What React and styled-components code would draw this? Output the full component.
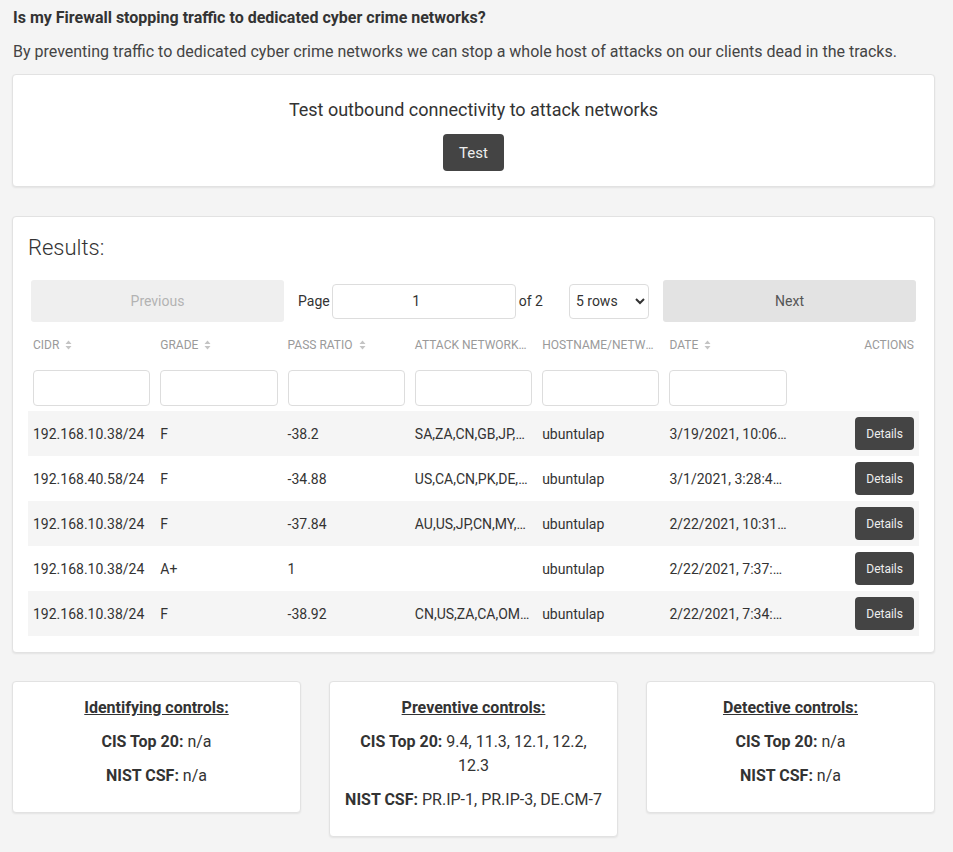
import React, { useState } from "react";
import styled, { createGlobalStyle } from "styled-components";

const GlobalStyle = createGlobalStyle`
  body {
    margin: 0;
    background: #f4f4f4;
    font-family: Roboto, "Liberation Sans", sans-serif;
    color: #333;
  }
`;

const Page = styled.div`
  width: 923px;
  padding: 6px 18px 20px 12px;
`;

const Question = styled.div`
  font-size: 16px;
  font-weight: 700;
  line-height: 24px;
  color: #333;
  padding-left: 1px;
`;

const Intro = styled.p`
  margin: 10px 0 10px;
  font-size: 16px;
  line-height: 24px;
  color: #444;
  padding-left: 1px;
`;

const Card = styled.div`
  box-sizing: border-box;
  background: #fff;
  border: 1px solid #e2e2e2;
  border-radius: 4px;
  box-shadow: 0 1px 2px rgba(0, 0, 0, 0.07);
`;

const TestCard = styled(Card)`
  padding: 21px 16px 15px;
  text-align: center;
`;

const TestTitle = styled.div`
  font-size: 18px;
  line-height: 27px;
  color: #333;
  margin-bottom: 11px;
`;

const DarkButton = styled.button`
  background: #444;
  color: #eee;
  border: none;
  border-radius: 4px;
  font-family: inherit;
  font-size: ${(p) => (p.small ? "12px" : "15px")};
  height: ${(p) => (p.small ? "33px" : "37px")};
  padding: 0 ${(p) => (p.small ? "11px" : "16px")};
  cursor: pointer;
`;

const ResultsCard = styled(Card)`
  margin-top: 29px;
  padding: 16px 15px 16px;
`;

const ResultsTitle = styled.div`
  font-size: 22px;
  font-weight: 300;
  line-height: 26px;
  color: #333;
  padding-top: 2px;
  margin-bottom: 16px;
`;

const Pagination = styled.div`
  display: flex;
  align-items: center;
  padding: 3px;
  width: 891px;
  box-sizing: border-box;
`;

const PageButton = styled.button`
  flex: 0 0 253px;
  height: 42px;
  border: none;
  border-radius: 3px;
  font-family: inherit;
  font-size: 14px;
  background: ${(p) => (p.disabled ? "#efefef" : "#e3e3e3")};
  color: ${(p) => (p.disabled ? "#b3b3b3" : "#555")};
  cursor: ${(p) => (p.disabled ? "default" : "pointer")};
`;

const PageCenter = styled.div`
  flex: 1;
  display: flex;
  align-items: center;
  justify-content: center;
  font-size: 14px;
  color: #333;
`;

const PageInput = styled.input`
  box-sizing: border-box;
  width: 184px;
  height: 35px;
  margin: 0 3px 0 2px;
  border: 1px solid #ddd;
  border-radius: 4px;
  text-align: center;
  font-family: inherit;
  font-size: 14px;
  color: #333;
  outline: none;
`;

const RowsSelect = styled.select`
  box-sizing: border-box;
  width: 80px;
  height: 35px;
  margin-left: 26px;
  border: 1px solid #ddd;
  border-radius: 4px;
  background: #fff;
  font-family: inherit;
  font-size: 14px;
  color: #333;
  padding: 0 2px;
`;

const Table = styled.div`
  width: 891px;
`;

const Row = styled.div`
  display: grid;
  grid-template-columns: repeat(7, 1fr);
  align-items: center;
  height: ${(p) => p.h}px;
  background: ${(p) => p.bg || "transparent"};
`;

const HeadCell = styled.div`
  padding: 0 5px;
  font-size: 12px;
  color: #9a9a9a;
  text-transform: uppercase;
  white-space: nowrap;
  overflow: hidden;
  text-overflow: ellipsis;
  text-align: ${(p) => (p.right ? "right" : "left")};
`;

const SortIcon = styled.svg`
  margin-left: 6px;
  vertical-align: -1px;
`;

const FilterCell = styled.div`
  padding: 0 5px;
`;

const FilterInput = styled.input`
  box-sizing: border-box;
  width: 100%;
  height: 36px;
  border: 1px solid #ddd;
  border-radius: 4px;
  outline: none;
`;

const Cell = styled.div`
  padding: 0 5px;
  font-size: 14px;
  color: #333;
  white-space: nowrap;
  overflow: hidden;
  text-overflow: ellipsis;
  text-align: ${(p) => (p.right ? "right" : "left")};
`;

const Controls = styled.div`
  display: grid;
  grid-template-columns: repeat(3, 289px);
  column-gap: 28px;
  align-items: start;
  margin-top: 28px;
`;

const ControlCard = styled(Card)`
  padding: 14px 10px 14px;
  text-align: center;
`;

const ControlLine = styled.p`
  margin: 0 0 10px;
  font-size: 16px;
  line-height: 24px;
  color: #333;
`;

const ControlTitle = styled(ControlLine)`
  font-weight: 700;
  text-decoration: underline;
`;

const CisLine = styled(ControlLine)`
  padding: 0 6px;
`;

const Sort = () => (
  <SortIcon width="7" height="10" viewBox="0 0 7 10">
    <path d="M3.5 0.5 L6.5 4 H0.5 Z M3.5 9.5 L6.5 6 H0.5 Z" fill="#c4c4c4" />
  </SortIcon>
);

const columns = ["CIDR", "Grade", "Pass Ratio", "Attack Networks", "Hostname/Network", "Date"];

const rows = [
  ["192.168.10.38/24", "F", "-38.2", "SA,ZA,CN,GB,JP,US,DE", "ubuntulap", "3/19/2021, 10:06:12 AM"],
  ["192.168.40.58/24", "F", "-34.88", "US,CA,CN,PK,DE,RU,BR", "ubuntulap", "3/1/2021, 3:28:45 PM"],
  ["192.168.10.38/24", "F", "-37.84", "AU,US,JP,CN,MY,DE,GB", "ubuntulap", "2/22/2021, 10:31:09 AM"],
  ["192.168.10.38/24", "A+", "1", "", "ubuntulap", "2/22/2021, 7:37:21 AM"],
  ["192.168.10.38/24", "F", "-38.92", "CN,US,ZA,CA,OM,DE", "ubuntulap", "2/22/2021, 7:34:02 AM"],
];

const controls = [
  { title: "Identifying controls:", cis: "n/a", nist: "n/a" },
  { title: "Preventive controls:", cis: "9.4, 11.3, 12.1, 12.2, 12.3", nist: "PR.IP-1, PR.IP-3, DE.CM-7" },
  { title: "Detective controls:", cis: "n/a", nist: "n/a" },
];

const App = () => {
  const [page, setPage] = useState(1);
  const [pageSize, setPageSize] = useState(5);

  return (
    <Page>
      <GlobalStyle />
      <Question>Is my Firewall stopping traffic to dedicated cyber crime networks?</Question>
      <Intro>
        By preventing traffic to dedicated cyber crime networks we can stop a whole host of attacks on our clients dead in the tracks.
      </Intro>

      <TestCard>
        <TestTitle>Test outbound connectivity to attack networks</TestTitle>
        <DarkButton>Test</DarkButton>
      </TestCard>

      <ResultsCard>
        <ResultsTitle>Results:</ResultsTitle>
        <Pagination>
          <PageButton disabled>Previous</PageButton>
          <PageCenter>
            Page
            <PageInput type="number" value={page} onChange={(e) => setPage(e.target.value)} />
            of 2
            <RowsSelect value={pageSize} onChange={(e) => setPageSize(e.target.value)}>
              <option value={5}>5 rows</option>
              <option value={10}>10 rows</option>
              <option value={20}>20 rows</option>
            </RowsSelect>
          </PageCenter>
          <PageButton onClick={() => setPage(2)}>Next</PageButton>
        </Pagination>

        <Table>
          <Row h={40}>
            {columns.map((c) => (
              <HeadCell key={c}>
                {c}
                <Sort />
              </HeadCell>
            ))}
            <HeadCell right>Actions</HeadCell>
          </Row>
          <Row h={46}>
            {columns.map((c) => (
              <FilterCell key={c}>
                <FilterInput />
              </FilterCell>
            ))}
            <div />
          </Row>
          {rows.map((r, i) => (
            <Row key={i} h={45} bg={i % 2 === 0 ? "#f5f5f5" : "#fff"}>
              {r.map((v, j) => (
                <Cell key={j}>{v}</Cell>
              ))}
              <Cell right>
                <DarkButton small>Details</DarkButton>
              </Cell>
            </Row>
          ))}
        </Table>
      </ResultsCard>

      <Controls>
        {controls.map((c) => (
          <ControlCard key={c.title}>
            <ControlTitle>{c.title}</ControlTitle>
            <CisLine>
              <strong>CIS Top 20:</strong> {c.cis}
            </CisLine>
            <ControlLine>
              <strong>NIST CSF:</strong> {c.nist}
            </ControlLine>
          </ControlCard>
        ))}
      </Controls>
    </Page>
  );
};

export default App;
